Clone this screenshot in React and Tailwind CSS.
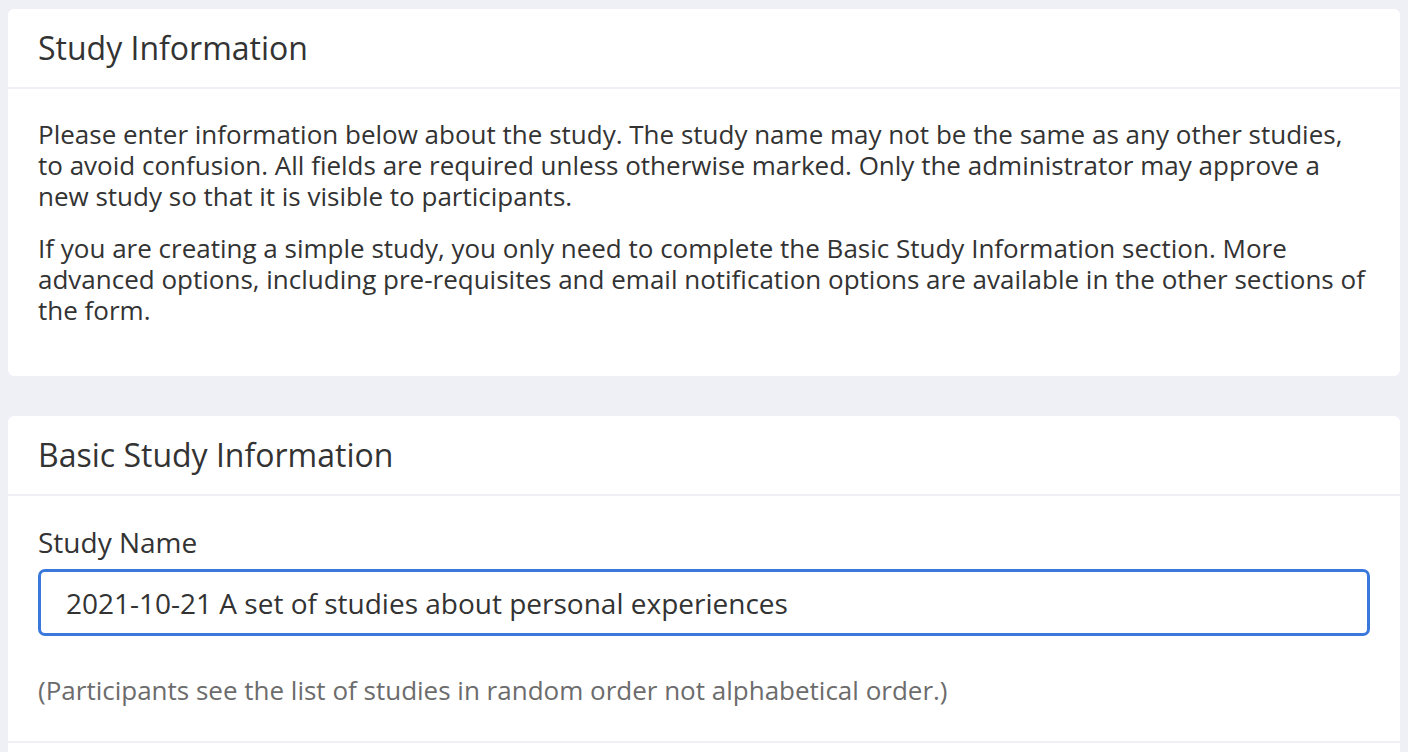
const Card = ({ title, children }) => (
  <div className="bg-white rounded-[6px]">
    <div className="h-[80px] flex items-center px-[30px] border-b-2 border-[#eff0f5]">
      <h2 className="text-[32px] text-[#333]">{title}</h2>
    </div>
    {children}
  </div>
);

export default function App() {
  return (
    <div
      className="min-h-screen bg-[#eff0f6] px-2 pt-[9px] text-[#333]"
      style={{ fontFamily: '"Open Sans", "Noto Sans", sans-serif' }}
    >
      <Card title="Study Information">
        <div className="px-[30px] pt-[30px] pb-[29px] text-[26px] leading-[31px]">
          <p className="mb-[21px]">
            Please enter information below about the study. The study name may
            not be the same as any other studies, to avoid confusion. All fields
            are required unless otherwise marked. Only the administrator may
            approve a new study so that it is visible to participants.
          </p>
          <p className="mb-[21px]">
            If you are creating a simple study, you only need to complete the
            Basic Study Information section. More advanced options, including
            pre-requisites and email notification options are available in the
            other sections of the form.
          </p>
        </div>
      </Card>

      <div className="h-[40px]" />

      <Card title="Basic Study Information">
        <div className="px-[30px] pt-[31px] pb-[35px] border-b-2 border-[#eff0f5]">
          <label className="block text-[28px] leading-[31px] mb-[11px]">
            Study Name
          </label>
          <input
            type="text"
            readOnly
            value="2021-10-21 A set of studies about personal experiences"
            className="block w-full h-[67px] rounded-[7px] border-[3px] border-[#3a78dc] px-[25px] text-[28px] text-[#333] outline-none"
          />
          <p className="mt-[39px] text-[26px] leading-[31px] text-[#6c6c6c]">
            (Participants see the list of studies in random order not
            alphabetical order.)
          </p>
        </div>
        <div className="h-[40px]" />
      </Card>
    </div>
  );
}
